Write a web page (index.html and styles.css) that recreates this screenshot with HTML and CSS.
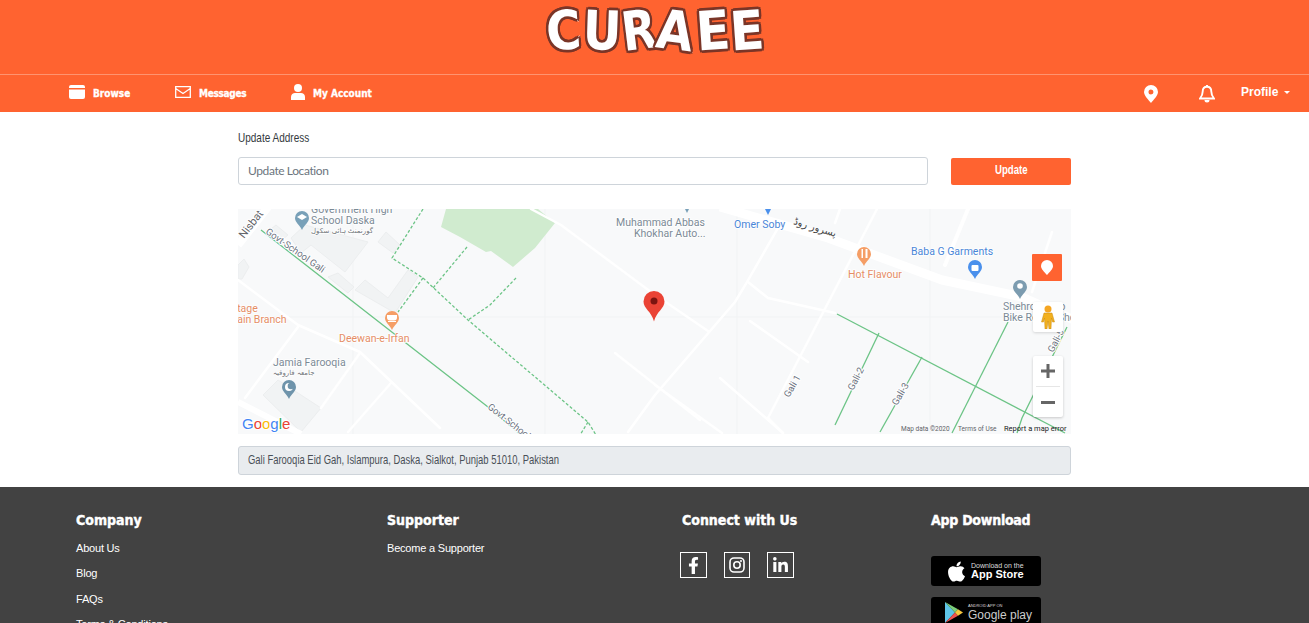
FILE: index.html
```html
<!DOCTYPE html>
<html lang="en">
<head>
    <meta charset="UTF-8">
    <meta name="viewport" content="width=device-width, initial-scale=1.0">
    <title>Curaee - Update Address</title>
    <link rel="stylesheet" href="styles.css">
</head>
<body>
    <header class="brand-bar">
        <a class="logo" href="#"><span class="l1">C</span><span class="l2">U</span><span class="l3">R</span><span class="l4">A</span><span class="l5">E</span><span class="l6">E</span></a>
    </header>

    <nav class="nav-bar">
        <div class="nav-left">
            <a class="nav-link nav-browse" href="#">
                <svg class="nav-icon" width="16" height="14" viewBox="0 0 16 14"><path fill="#fff" fill-rule="evenodd" d="M2 0h12a2 2 0 0 1 2 2v10a2 2 0 0 1-2 2H2a2 2 0 0 1-2-2V2a2 2 0 0 1 2-2zM0 3v1.500h16V3z"/></svg>
                Browse
            </a>
            <a class="nav-link nav-messages" href="#">
                <svg class="nav-icon" width="16" height="12" viewBox="0 0 16 12"><path fill="none" stroke="#fff" stroke-width="1.300" d="M.7.7h14.600v10.600H.7zM.7 2.500 8 7.500l7.300-5"/></svg>
                Messages
            </a>
            <a class="nav-link nav-account" href="#">
                <svg class="nav-icon" width="14" height="16" viewBox="0 0 14 16"><circle fill="#fff" cx="7" cy="4" r="4"/><path fill="#fff" d="M0 16v-3c0-2.500 2-4 4-4h6c2 0 4 1.500 4 4v3z"/></svg>
                My Account
            </a>
        </div>
        <div class="nav-right">
            <svg class="pin-icon" width="14" height="18" viewBox="0 0 14 18"><path fill="#fff" fill-rule="evenodd" d="M7 0a7 7 0 0 1 7 7c0 3.500-4.500 8-7 11-2.500-3-7-7.500-7-11a7 7 0 0 1 7-7zm0 4.500a2.500 2.500 0 1 0 0 5 2.500 2.500 0 0 0 0-5z"/></svg>
            <svg class="bell-icon" width="16" height="18" viewBox="0 0 16 18"><path fill="none" stroke="#fff" stroke-width="1.900" d="M8 1.800c-2.800 0-4.300 2-4.300 4.700 0 3.500-1.300 5.300-2.700 7h14c-1.400-1.700-2.700-3.500-2.700-7 0-2.700-1.500-4.700-4.300-4.700z"/><path fill="#fff" d="M7 0h2v2H7zM5.500 15h5a2.500 2.500 0 0 1-5 0z"/></svg>
            <a class="profile-link" href="#">Profile<span class="caret"></span></a>
        </div>
    </nav>

    <main class="content">
        <label class="field-label" for="location"><span class="narrow-label">Update Address</span></label>
        <div class="update-row">
            <input class="location-input" id="location" type="text" placeholder="Update Location">
            <button class="update-btn"><span class="narrow-btn">Update</span></button>
        </div>

        <div class="map">
            <svg class="map-canvas" width="833" height="225" viewBox="0 0 833 225">
                <defs>
                    <path id="poi" d="M0-7a7 7 0 0 1 7 7c0 4.500-4.500 6.500-7 12-2.500-5.500-7-7.500-7-12a7 7 0 0 1 7-7z"/>
                </defs>
                <rect width="833" height="225" fill="#f8f9fa"/>
                <g stroke="#f1f3f4" stroke-width="1">
                    <path d="M115 0v225M307 0v225M499 0v225M692 0v225M0 108h833"/>
                </g>
                <polygon fill="#d0ebcf" points="208,0 203,18 222,28 248,43 253,42 275,58 297,39 317,14 300,0"/>
                <g fill="#f1f3f4" stroke="#eceeef">
                    <polygon points="53,29 67,16 130,33 107,63 73,36 63,44"/>
                    <polygon points="117,81 127,71 150,89 170,61 180,68 157,104"/>
                    <polygon points="140,33 148,23 162,36 155,44"/>
                    <polygon points="25,186 40,171 83,199 63,223"/>
                    <polygon points="28,24 38,16 50,26 40,34"/>
                    <polygon points="90,68 100,64 116,78 110,84"/>
                    <polygon points="0,56 6,50 11,58 4,70 0,70"/>
                </g>
                <g fill="none" stroke="#fff" stroke-linecap="round" stroke-linejoin="round">
                    <g stroke-width="2.500">
                        <path d="M0 71 60 116 122 143 202 219"/>
                        <path d="M60 118 7 189"/>
                        <path d="M122 144 83 199"/>
                        <path d="M153 174 110 223"/>
                        <path d="M293 0 323 16 413 83 470 122"/>
                        <path d="M377 144 462 211"/>
                        <path d="M540 19 509 73 497 93 417 186 390 223"/>
                        <path d="M510 73 530 89 597 104"/>
                        <path d="M639 0 530 209 545 224"/>
                        <path d="M512 112 570 153"/>
                        <path d="M482 169 545 224"/>
                        <path d="M417 176 484 224"/>
                        <path d="M602 0 597 14"/>
                        <path d="M814 23 794 83"/>
                    </g>
                    <path stroke-width="4" d="M730 0 707 56"/>
                    <path stroke-width="9" stroke-linecap="butt" d="M482-2 590 29 704 71 784 88 836 111"/>
                    <path stroke-width="8" stroke-linecap="butt" d="M30-2 0 36"/>
                    <path stroke-width="6" stroke-linecap="butt" d="M0 193 63 225"/>
                </g>
                <g fill="none" stroke="#6cc486" stroke-width="1.300">
                    <path d="M23 21 250 198 283 226"/>
                    <path d="M599 105 827 224"/>
                    <path d="M641 124 597 216"/>
                    <path d="M684 148 642 223"/>
                    <path d="M770 113 714 224"/>
                    <path d="M829 118 784 209 779 224"/>
                    <g stroke-dasharray="3 2">
                        <path d="M185 0 154 49 185 69 230 111 350 213 358 226"/>
                        <path d="M185 69 160 103"/>
                        <path d="M229 38 195 79"/>
                        <path d="M278 69 252 96 230 111"/>
                        <path d="M350 213 342 226"/>
                    </g>
                </g>

                <g class="road-label">
                    <text transform="translate(27 24) rotate(35)">Govt-School Gali</text>
                    <text transform="translate(249 199) rotate(38)">Govt-School Gali</text>
                    <text class="road-big" transform="translate(6 30) rotate(-52)">Nisbat</text>
                    <text transform="translate(551 189) rotate(-60)">Gali 1</text>
                    <text transform="translate(615 182) rotate(-62)">Gali-2</text>
                    <text transform="translate(659 197) rotate(-60)">Gali-3</text>
                    <text transform="translate(815 144) rotate(-62)">Gali-5</text>
                    <text class="road-urdu" transform="translate(555 15) rotate(17)">پسرور روڈ</text>
                </g>

                <g class="poi-grey">
                    <text x="73" y="4">Government High</text>
                    <text x="73" y="15">School Daska</text>
                    <text class="urdu" x="73" y="24">گورنمنٹ ہائی سکول</text>
                    <text x="35" y="157">Jamia Farooqia</text>
                    <text class="urdu" x="35" y="166">جامعہ فاروقیہ</text>
                    <text x="378" y="17">Muhammad Abbas</text>
                    <text x="396" y="28">Khokhar Auto...</text>
                    <text x="765" y="101">Shehroz Auto</text>
                    <text x="765" y="112">Bike Repair Shop</text>
                </g>
                <g class="poi-orange">
                    <text x="101" y="133">Deewan-e-Irfan</text>
                    <text x="-20" y="103">Heritage</text>
                    <text x="-10" y="114">Main Branch</text>
                    <text x="610" y="69">Hot Flavour</text>
                </g>
                <g class="poi-blue">
                    <text x="496" y="19">Omer Soby</text>
                    <text x="673" y="46">Baba G Garments</text>
                </g>

                <use href="#poi" x="64" y="9" fill="#78a0b8"/>
                <use href="#poi" x="154" y="109" fill="#f59e66"/>
                <use href="#poi" x="51" y="178" fill="#6f94ab"/>
                <use href="#poi" x="626" y="45" fill="#f59e66"/>
                <use href="#poi" x="737" y="58" fill="#4a90ec"/>
                <use href="#poi" x="782" y="78" fill="#7c9cb0"/>
                <path fill="#4a90ec" d="M525-4h10l-5 10z"/>
                <path fill="#78a0b8" d="M445-4h8l-4 8z"/>
                <g fill="#fff">
                    <path d="M59 8l5-3 5 3-5 3z"/>
                    <path d="M149 106h10v2.500a3 3 0 0 1-3 3h-4a3 3 0 0 1-3-3zM150 112h8v1h-8z"/>
                    <circle cx="51" cy="178" r="4"/>
                    <rect x="623.500" y="40" width="1.500" height="9"/>
                    <rect x="627.500" y="40" width="2" height="9"/>
                    <rect x="733.500" y="56" width="7" height="6" rx="1"/>
                    <circle cx="782" cy="77" r="2.800"/>
                </g>
                <circle cx="53" cy="177" r="3.300" fill="#6f94ab"/>

                <path fill="#ea4335" d="M416 82a10.500 10.500 0 0 1 10.500 10.500c0 7-8 10-10.500 20-2.500-10-10.500-13-10.500-20A10.500 10.500 0 0 1 416 82z"/>
                <circle cx="416" cy="92" r="3.500" fill="#7b1410"/>

                <text class="google-logo" x="4" y="220"><tspan fill="#4285f4">G</tspan><tspan fill="#ea4335">o</tspan><tspan fill="#fbbc05">o</tspan><tspan fill="#4285f4">g</tspan><tspan fill="#34a853">l</tspan><tspan fill="#ea4335">e</tspan></text>

                <text class="map-terms" x="663" y="222">Map data ©2020</text>
                <text class="map-terms" x="720" y="222">Terms of Use</text>
                <text class="map-report" x="766" y="222">Report a map error</text>
            </svg>

            <button class="map-locate">
                <svg width="12" height="15" viewBox="0 0 12 15"><path fill="#fff" d="M6 0a6 6 0 0 1 6 6c0 3-3.500 6-6 9-2.500-3-6-6-6-9a6 6 0 0 1 6-6z"/></svg>
            </button>
            <div class="map-pegman">
                <svg width="14" height="24" viewBox="0 0 14 24"><circle cx="7" cy="4" r="3.500" fill="#f5a623"/><path fill="#f2b01e" stroke="#c98a12" stroke-width=".5" d="M3 8h8l2.500 9h-2L10.500 13l-.5 11H8l-1-8-1 8H4L3.500 13l-1 4h-2z"/></svg>
            </div>
            <div class="map-zoom">
                <button class="zoom-btn">
                    <svg width="14" height="14" viewBox="0 0 14 14"><path fill="#666" d="M5.500 0h3v5.500H14v3H8.500V14h-3V8.500H0v-3h5.500z"/></svg>
                </button>
                <span class="zoom-sep"></span>
                <button class="zoom-btn">
                    <svg width="14" height="3" viewBox="0 0 14 3"><path fill="#666" d="M0 0h14v3H0z"/></svg>
                </button>
            </div>
        </div>

        <div class="address-box"><span class="narrow-address">Gali Farooqia Eid Gah, Islampura, Daska, Sialkot, Punjab 51010, Pakistan</span></div>
    </main>

    <footer class="footer">
        <div class="footer-col">
            <h4>Company</h4>
            <a class="footer-link" href="#">About Us</a>
            <a class="footer-link" href="#">Blog</a>
            <a class="footer-link" href="#">FAQs</a>
            <a class="footer-link" href="#">Terms &amp; Conditions</a>
        </div>
        <div class="footer-col">
            <h4>Supporter</h4>
            <a class="footer-link" href="#">Become a Supporter</a>
        </div>
        <div class="footer-col">
            <h4 class="connect-title">Connect with Us</h4>
            <div class="social-row">
                <a class="social" href="#"><svg width="11" height="17" viewBox="0 0 320 512"><path fill="#fff" d="M279.140 288l14.220-92.660h-88.910v-60.130c0-25.350 12.420-50.060 52.240-50.060h40.420V6.260S260.430 0 225.360 0c-73.220 0-121.080 44.380-121.080 124.720v70.620H22.890V288h81.390v224h100.170V288z"/></svg></a>
                <a class="social" href="#"><svg width="16" height="16" viewBox="0 0 16 16"><rect x="1" y="1" width="14" height="14" rx="4" fill="none" stroke="#fff" stroke-width="1.600"/><circle cx="8" cy="8" r="3.200" fill="none" stroke="#fff" stroke-width="1.600"/><circle cx="12" cy="4" r="1" fill="#fff"/></svg></a>
                <a class="social" href="#"><svg width="15" height="17" viewBox="0 0 448 512"><path fill="#fff" d="M100.280 448H7.400V148.900h92.880zM53.790 108.100C24.090 108.100 0 83.500 0 53.800a53.790 53.790 0 0 1 107.580 0c0 29.700-24.100 54.300-53.790 54.300zM447.900 448h-92.680V302.400c0-34.700-.7-79.200-48.290-79.200-48.290 0-55.690 37.700-55.690 76.700V448h-92.780V148.900h89.080v40.800h1.300c12.400-23.500 42.690-48.300 87.880-48.300 94 0 111.280 61.900 111.280 142.300V448z"/></svg></a>
            </div>
        </div>
        <div class="footer-col">
            <h4 class="app-title">App Download</h4>
            <a class="store-badge badge-apple" href="#">
                <svg width="19" height="23" viewBox="0 0 384 512"><path fill="#fff" d="M318.700 268.700c-.2-36.700 16.400-64.400 50-84.800-18.800-26.900-47.200-41.700-84.700-44.600-35.500-2.800-74.300 20.700-88.500 20.700-15 0-49.400-19.700-76.400-19.700C63.300 141.200 4 184.800 4 273.500q0 39.300 14.400 81.200c12.800 36.700 59 126.700 107.200 125.200 25.200-.6 43-17.900 75.800-17.900 31.800 0 48.300 17.900 76.400 17.900 48.600-.7 90.400-82.500 102.600-119.300-65.200-30.700-61.700-90-61.700-91.900zm-56.600-164.200c27.300-32.400 24.800-61.900 24-72.500-24.100 1.400-52 16.400-67.900 34.900-17.500 19.800-27.800 44.300-25.600 71.900 26.100 2 49.900-11.400 69.500-34.300z"/></svg>
                <span class="badge-text"><small>Download on the</small><strong>App Store</strong></span>
            </a>
            <a class="store-badge badge-google" href="#">
                <svg width="18" height="21" viewBox="0 0 18 21"><path fill="#5ec4e8" d="M0 0v21l10-10.500z"/><path fill="#7ccf7a" d="M0 0l13 7.200-3 3.300z"/><path fill="#f0514f" d="M0 21l13-7.200-3-3.300z"/><path fill="#f8c63d" d="M13 7.200l5 3.300-5 3.300-3-3.300z"/></svg>
                <span class="badge-text"><small class="android">ANDROID APP ON</small><span class="gplay">Google play</span></span>
            </a>
        </div>
    </footer>
</body>
</html>
```

FILE: styles.css
```css
* {
    box-sizing: border-box;
}
html, body {
    height: 100%;
}
body {
    margin: 0;
    overflow: hidden;
    background: #fff;
    font-family: "Liberation Sans", Arial, sans-serif;
}
a {
    color: inherit;
    text-decoration: none;
}

/* header */
.brand-bar {
    height: 75px;
    background: #ff6330;
    border-bottom: 1px solid #ff9470;
    display: flex;
    justify-content: center;
}
.logo {
    display: flex;
    margin-top: 1px;
    margin-left: -1px;
    height: 60px;
    font-family: "DejaVu Sans", sans-serif;
    font-weight: 700;
    font-size: 50px;
    line-height: 60px;
    color: #fff;
    -webkit-text-stroke: 2.500px #fff;
    text-shadow: 2.500px 0 0 #7a3527, -2.500px 0 0 #7a3527, 0 2.500px 0 #7a3527, 0 -2.500px 0 #7a3527,
        2px 2px 0 #7a3527, -2px 2px 0 #7a3527, 2px -2px 0 #7a3527, -2px -2px 0 #7a3527;
    paint-order: stroke fill;
}
.logo span {
    display: block;
    text-align: center;
}
.l1 { transform: rotate(-4deg) scale(.95, 1.08); width: 37px; }
.l2 { transform: rotate(2deg) scale(.95, 1.08); width: 38px; }
.l3 { transform: rotate(-7deg) scale(.9, 1.08); width: 34px; }
.l4 { transform: rotate(7deg) scale(.95, 1.08); width: 42px; }
.l5 { transform: rotate(-4deg) scale(1, 1.08); width: 34px; }
.l6 { transform: rotate(-4deg) scale(1, 1.08); width: 33px; }

.nav-bar {
    height: 37px;
    background: #ff6330;
    display: flex;
    justify-content: space-between;
    align-items: center;
    color: #fff;
}
.nav-left {
    display: flex;
    align-items: center;
    padding-left: 69px;
}
.nav-link {
    display: flex;
    align-items: center;
    gap: 8px;
    font-family: "DejaVu Sans", sans-serif;
    font-stretch: condensed;
    font-weight: 700;
    font-size: 10px;
    -webkit-text-stroke: .3px #fff;
}
.nav-browse { width: 106px; }
.nav-messages { width: 116px; letter-spacing: -.3px; }
.nav-icon { position: relative; top: -2px; }
.nav-right {
    display: flex;
    align-items: center;
    padding-right: 17px;
}
.pin-icon {
    margin-right: 41px;
}
.bell-icon {
    margin-right: 26px;
}
.profile-link {
    font-size: 12px;
    font-weight: 700;
    position: relative;
    top: -2px;
    width: 51px;
}
.caret {
    display: inline-block;
    margin-left: 6px;
    vertical-align: 2px;
    border-top: 3.500px solid #fff;
    border-left: 3.500px solid transparent;
    border-right: 3.500px solid transparent;
}

/* main */
.content {
    width: 833px;
    height: 375px;
    margin-left: 238px;
    padding-top: 19px;
}
.field-label {
    display: block;
    font-size: 13px;
    line-height: 14px;
    color: #343a40;
}
.narrow-label {
    display: inline-block;
    transform: scaleX(.77);
    transform-origin: left;
}
.update-row {
    display: flex;
    justify-content: space-between;
    align-items: flex-start;
    margin-top: 12px;
}
.location-input {
    width: 690px;
    height: 28px;
    padding: 0 9px 2px;
    border: 1px solid #ced4da;
    border-radius: 3px;
    font-family: Lato, sans-serif;
    font-size: 12px;
    letter-spacing: -.4px;
    color: #495057;
}
.location-input::placeholder {
    color: #6c757d;
}
.update-btn {
    width: 120px;
    height: 27px;
    margin-top: 1px;
    border: none;
    border-radius: 2px;
    background: #ff6330;
    color: #fff;
    font-family: "Liberation Sans", sans-serif;
    font-size: 12px;
    font-weight: 700;
}
.narrow-btn {
    display: inline-block;
    transform: scaleX(.8);
    position: relative;
    top: -2px;
}

/* map */
.map {
    position: relative;
    width: 833px;
    height: 225px;
    margin-top: 24px;
    overflow: hidden;
}
.map-canvas {
    display: block;
}
.map-canvas text {
    font-family: Roboto, "Noto Sans", sans-serif;
}
.road-label text {
    font-size: 9.500px;
    fill: #6b7280;
    stroke: #fff;
    stroke-width: 2px;
    paint-order: stroke fill;
}
.road-label .road-big {
    font-size: 11px;
    fill: #5f6368;
}
.road-label .road-urdu {
    font-family: "DejaVu Sans", sans-serif;
    font-size: 10px;
    fill: #444;
    stroke: none;
}
.poi-grey text, .poi-orange text, .poi-blue text {
    font-size: 10.500px;
    stroke: #fff;
    stroke-width: 1.500px;
    paint-order: stroke fill;
}
.poi-grey text { fill: #7b8a96; }
.poi-orange text { fill: #e58d66; }
.poi-blue text { fill: #4a86d8; }
.poi-grey .urdu {
    font-family: "DejaVu Sans", sans-serif;
    font-size: 7px;
    fill: #70757a;
}
.map-canvas .google-logo {
    font-family: "Liberation Sans", sans-serif;
    font-size: 15px;
    stroke: #fff;
    stroke-width: 2px;
    paint-order: stroke fill;
}
.map-terms {
    font-size: 6.500px;
    fill: #5f6368;
}
.map-report {
    font-size: 7.500px;
    fill: #222;
}
.map-locate {
    position: absolute;
    left: 794px;
    top: 45px;
    width: 30px;
    height: 27px;
    padding: 0;
    border: none;
    border-radius: 1px;
    background: #ff6330;
    display: flex;
    align-items: center;
    justify-content: center;
}
.map-pegman {
    position: absolute;
    left: 795px;
    top: 93px;
    width: 30px;
    height: 30px;
    background: #fff;
    border-radius: 2px;
    box-shadow: 0 1px 3px rgba(0, 0, 0, 0.15);
    display: flex;
    align-items: center;
    justify-content: center;
}
.map-zoom {
    position: absolute;
    left: 795px;
    top: 147px;
    width: 30px;
    height: 61px;
    background: #fff;
    border-radius: 2px;
    box-shadow: 0 1px 3px rgba(0, 0, 0, 0.2);
    display: flex;
    flex-direction: column;
    align-items: center;
}
.zoom-btn {
    width: 30px;
    height: 30px;
    padding: 0;
    border: none;
    background: none;
    display: flex;
    align-items: center;
    justify-content: center;
}
.zoom-sep {
    width: 24px;
    height: 1px;
    background: #e6e6e6;
}

.address-box {
    height: 29px;
    margin-top: 12px;
    padding: 0 9px;
    background: #e9ecef;
    border: 1px solid #ced4da;
    border-radius: 3px;
    font-size: 13px;
    line-height: 26px;
    color: #495057;
    white-space: nowrap;
}
.narrow-address {
    display: inline-block;
    transform: scaleX(.727);
    transform-origin: left;
}

/* footer */
.footer {
    background: #424242;
    height: 200px;
    padding: 23px 0 0 76px;
    display: grid;
    grid-template-columns: 311px 295px 249px 200px;
    color: #fff;
}
.footer-col h4 {
    margin: 0 0 12px;
    font-family: "DejaVu Sans", sans-serif;
    font-stretch: condensed;
    font-size: 14px;
    line-height: 20px;
    font-weight: 700;
    -webkit-text-stroke: .4px #fff;
}
.footer-col .app-title {
    letter-spacing: -.25px;
}
.footer-link {
    display: block;
    font-size: 11px;
    line-height: 13px;
    margin-bottom: 12.400px;
    letter-spacing: -.2px;
}
.social-row {
    display: flex;
    gap: 17px;
    margin-left: -2px;
    margin-top: 22px;
}
.social {
    width: 26.500px;
    height: 26px;
    border: 1px solid #fff;
    display: flex;
    align-items: center;
    justify-content: center;
}
.store-badge {
    width: 110px;
    height: 30px;
    margin-top: 26px;
    margin-bottom: -15px;
    background: #000;
    border-radius: 3px;
    display: flex;
    align-items: center;
    padding-left: 16px;
    gap: 5px;
}
.badge-google {
    margin-top: 26px;
    padding-left: 14px;
    height: 30px;
}
.badge-text {
    display: flex;
    flex-direction: column;
}
.badge-text small {
    font-size: 7px;
    line-height: 7px;
    color: #ddd;
}
.badge-text strong {
    font-size: 11px;
    line-height: 11px;
}
.badge-text .android {
    font-size: 4px;
    line-height: 5px;
}
.gplay {
    font-size: 12px;
    line-height: 14px;
    color: #ccc;
}
```
